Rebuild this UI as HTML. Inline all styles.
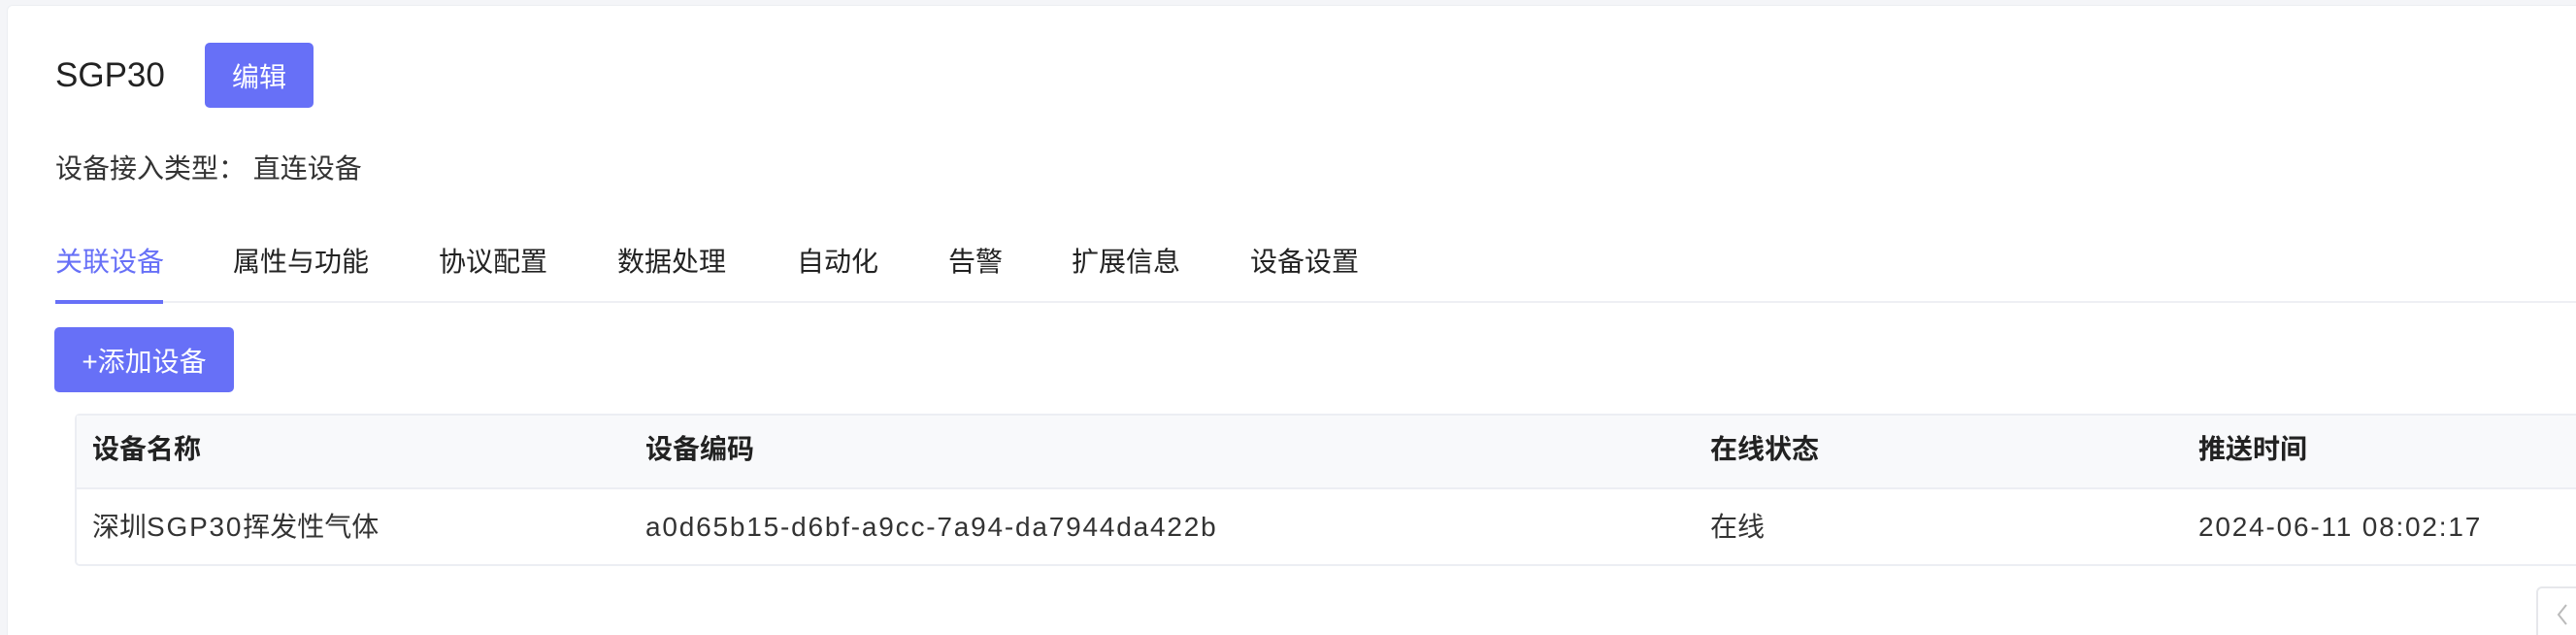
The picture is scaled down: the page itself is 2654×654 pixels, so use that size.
<!DOCTYPE html>
<html><head><meta charset="utf-8"><style>
*{margin:0;padding:0;box-sizing:border-box}
html,body{width:2654px;height:654px;overflow:hidden;background:#f4f5f8;font-family:"Liberation Sans","Noto Sans CJK SC",sans-serif;color:#222}
#wrap{position:relative;width:2654px;height:654px;overflow:hidden}
.card{position:absolute;left:7px;top:5px;width:2647px;height:649px;background:#fff;border-radius:6px 0 0 0;border-left:1px solid #eceef2;border-top:1px solid #eceef2}
.abs{position:absolute;white-space:nowrap}
.btn{position:absolute;background:#6770f7;color:#fff;border-radius:5px;display:flex;align-items:center;justify-content:center}
.tab{position:absolute;top:251px;font-size:28px;color:#222;line-height:38px}
.th{position:absolute;top:444px;font-size:28px;font-weight:bold;color:#222;line-height:38px}
.td{position:absolute;top:524px;font-size:28px;color:#333;line-height:38px}
.l{letter-spacing:1.8px}
</style></head><body><div id="wrap">
<div class="card"></div>
<div class="abs" style="left:57px;top:56px;font-size:35px;line-height:44px;color:#222">SGP30</div>
<div class="btn" style="left:211px;top:44px;width:112px;height:67px;font-size:28px">编辑</div>
<div class="abs" style="left:57px;top:155px;font-size:28px;line-height:38px;color:#333">设备接入类型：&nbsp;直连设备</div>
<div class="tab" style="left:57px;color:#6770f7">关联设备</div>
<div class="tab" style="left:240px">属性与功能</div>
<div class="tab" style="left:452px">协议配置</div>
<div class="tab" style="left:636px">数据处理</div>
<div class="tab" style="left:821px">自动化</div>
<div class="tab" style="left:977px">告警</div>
<div class="tab" style="left:1104px">扩展信息</div>
<div class="tab" style="left:1288px">设备设置</div>
<div class="abs" style="left:57px;top:310px;width:2597px;height:2px;background:#eeeff4"></div>
<div class="abs" style="left:57px;top:309px;width:111px;height:4px;background:#6770f7"></div>
<div class="btn" style="left:56px;top:337px;width:185px;height:67px;font-size:28px">+添加设备</div>
<div class="abs" style="left:77px;top:426px;width:2577px;height:157px;border:2px solid #eceef3;border-right:none;border-radius:5px 0 0 5px;background:#fff"></div>
<div class="abs" style="left:79px;top:428px;width:2575px;height:76px;background:#f8f9fb;border-bottom:2px solid #eceef3"></div>
<div class="th" style="left:95px">设备名称</div>
<div class="th" style="left:665px">设备编码</div>
<div class="th" style="left:1762px">在线状态</div>
<div class="th" style="left:2265px">推送时间</div>
<div class="td" style="left:95px">深圳<span class="l">SGP30</span>挥发性气体</div>
<div class="td l" style="left:665px">a0d65b15-d6bf-a9cc-7a94-da7944da422b</div>
<div class="td" style="left:1762px">在线</div>
<div class="td l" style="left:2265px">2024-06-11 08:02:17</div>
<div class="abs" style="left:2613px;top:604px;width:41px;height:50px;border:2px solid #e6e7eb;border-right:none;border-bottom:none;border-radius:6px 0 0 0;background:#fff"></div>
<svg class="abs" style="left:2632px;top:620px" width="16" height="26" viewBox="0 0 16 26"><path d="M12 3 L4 13 L12 23" fill="none" stroke="#bbb" stroke-width="2"/></svg>
</div></body></html>
